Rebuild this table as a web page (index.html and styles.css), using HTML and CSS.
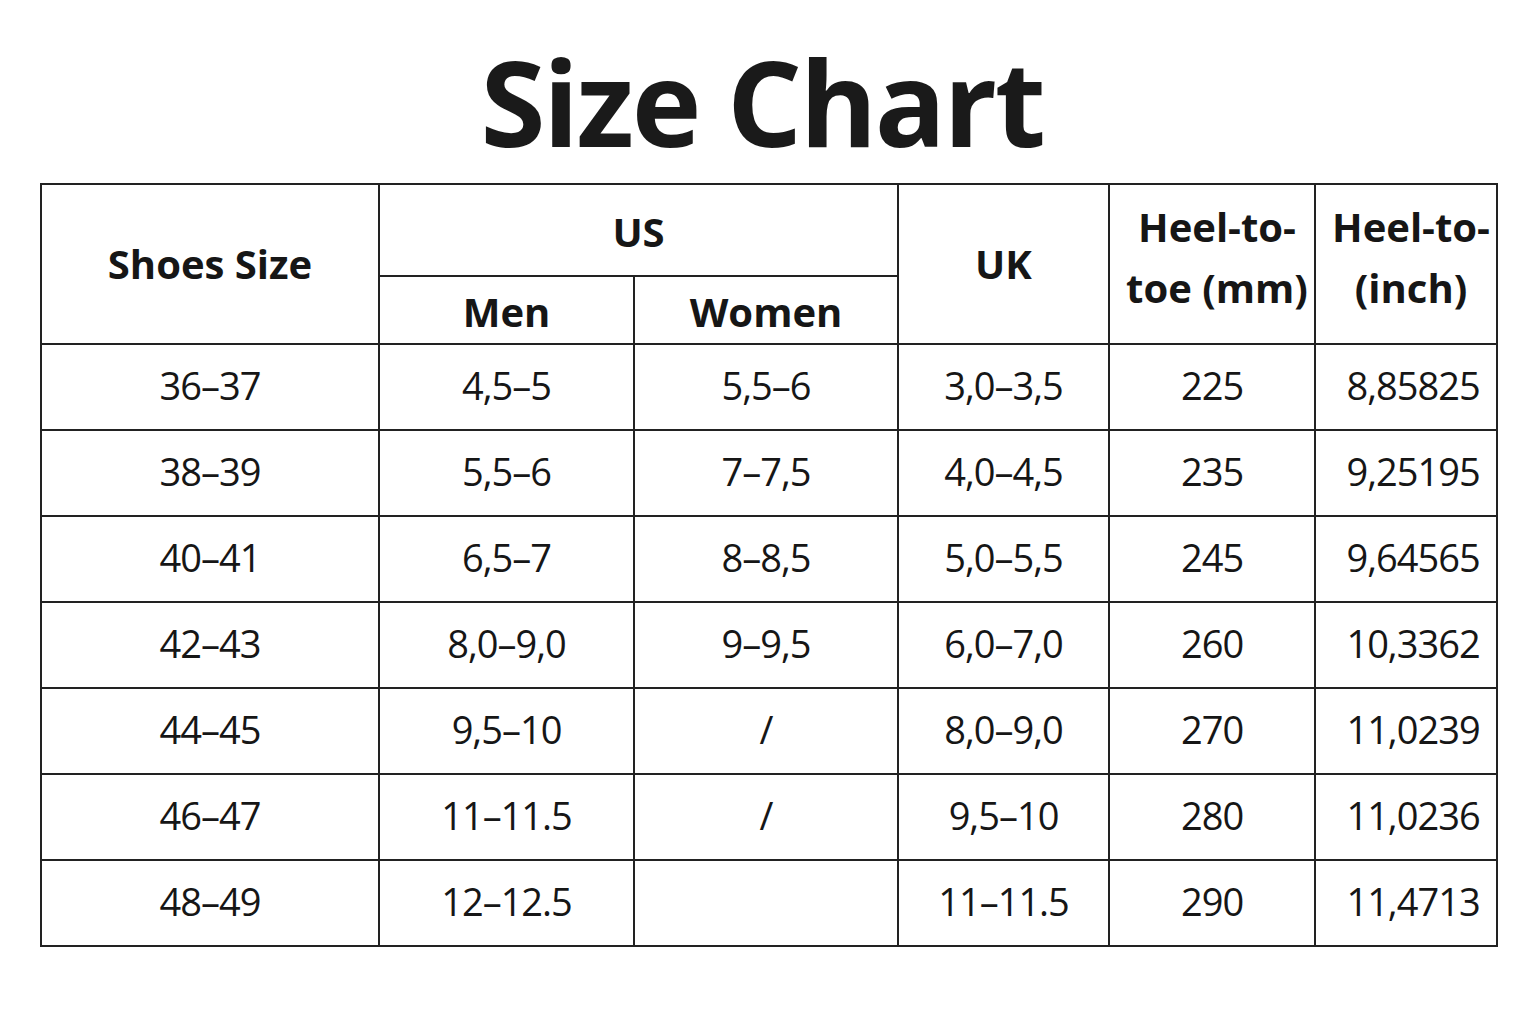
FILE: index.html
```html
<!DOCTYPE html>
<html lang="en">
<head>
<meta charset="utf-8">
<title>Size Chart</title>
<link rel="stylesheet" href="styles.css">
</head>
<body>
<main class="page">
  <h1 class="title">Size Chart</h1>
  <table class="chart">
    <colgroup>
      <col class="c1"><col class="c2"><col class="c3"><col class="c4"><col class="c5"><col class="c6">
    </colgroup>
    <thead>
      <tr class="head-top">
        <th rowspan="2">Shoes Size</th>
        <th colspan="2" class="us">US</th>
        <th rowspan="2">UK</th>
        <th rowspan="2" class="two-line">Heel-to-<br>toe (mm)</th>
        <th rowspan="2" class="two-line">Heel-to-<br>(inch)</th>
      </tr>
      <tr class="head-sub">
        <th>Men</th>
        <th>Women</th>
      </tr>
    </thead>
    <tbody>
      <tr><td>36–37</td><td>4,5–5</td><td>5,5–6</td><td>3,0–3,5</td><td>225</td><td class="inch">8,85825</td></tr>
      <tr><td>38–39</td><td>5,5–6</td><td>7–7,5</td><td>4,0–4,5</td><td>235</td><td class="inch">9,25195</td></tr>
      <tr><td>40–41</td><td>6,5–7</td><td>8–8,5</td><td>5,0–5,5</td><td>245</td><td class="inch">9,64565</td></tr>
      <tr><td>42–43</td><td>8,0–9,0</td><td>9–9,5</td><td>6,0–7,0</td><td>260</td><td class="inch">10,3362</td></tr>
      <tr><td>44–45</td><td>9,5–10</td><td>/</td><td>8,0–9,0</td><td>270</td><td class="inch">11,0239</td></tr>
      <tr><td>46–47</td><td>11–11.5</td><td>/</td><td>9,5–10</td><td>280</td><td class="inch">11,0236</td></tr>
      <tr><td>48–49</td><td>12–12.5</td><td></td><td>11–11.5</td><td>290</td><td class="inch">11,4713</td></tr>
    </tbody>
  </table>
</main>
</body>
</html>
```

FILE: styles.css
```css
html, body {
  margin: 0;
  padding: 0;
  background: #ffffff;
}

body {
  font-family: "Open Sans", "Noto Sans", sans-serif;
  color: #161616;
}

.page {
  padding: 0 40px;
}

.title {
  margin: 43px 0 22px;
  padding-right: 12px;
  font-size: 118px;
  line-height: 118px;
  font-weight: 700;
  text-align: center;
  letter-spacing: -2.5px;
  color: #1a1a1a;
}

.chart {
  width: 1456px;
  border-collapse: collapse;
  table-layout: fixed;
}

.c1 { width: 338px; }
.c2 { width: 255px; }
.c3 { width: 264px; }
.c4 { width: 211px; }
.c5 { width: 206px; }
.c6 { width: 182px; }

.chart th,
.chart td {
  border: 2px solid #222;
  text-align: center;
  vertical-align: middle;
  padding: 0;
  box-sizing: border-box;
}

.chart th {
  font-size: 40px;
  font-weight: 700;
  letter-spacing: 0;
  line-height: 1.2;
}

.head-top th {
  height: 92px;
}

.head-sub th {
  height: 68px;
  padding-top: 4px;
}

.chart th.us {
  padding-top: 4px;
}

.chart th.two-line {
  line-height: 61px;
  padding-bottom: 14px;
  padding-left: 10px;
}

.chart td {
  height: 86px;
  font-size: 38px;
  font-weight: 400;
  letter-spacing: -1px;
  padding-bottom: 4px;
}

.chart td.inch {
  padding-left: 14px;
}
```
